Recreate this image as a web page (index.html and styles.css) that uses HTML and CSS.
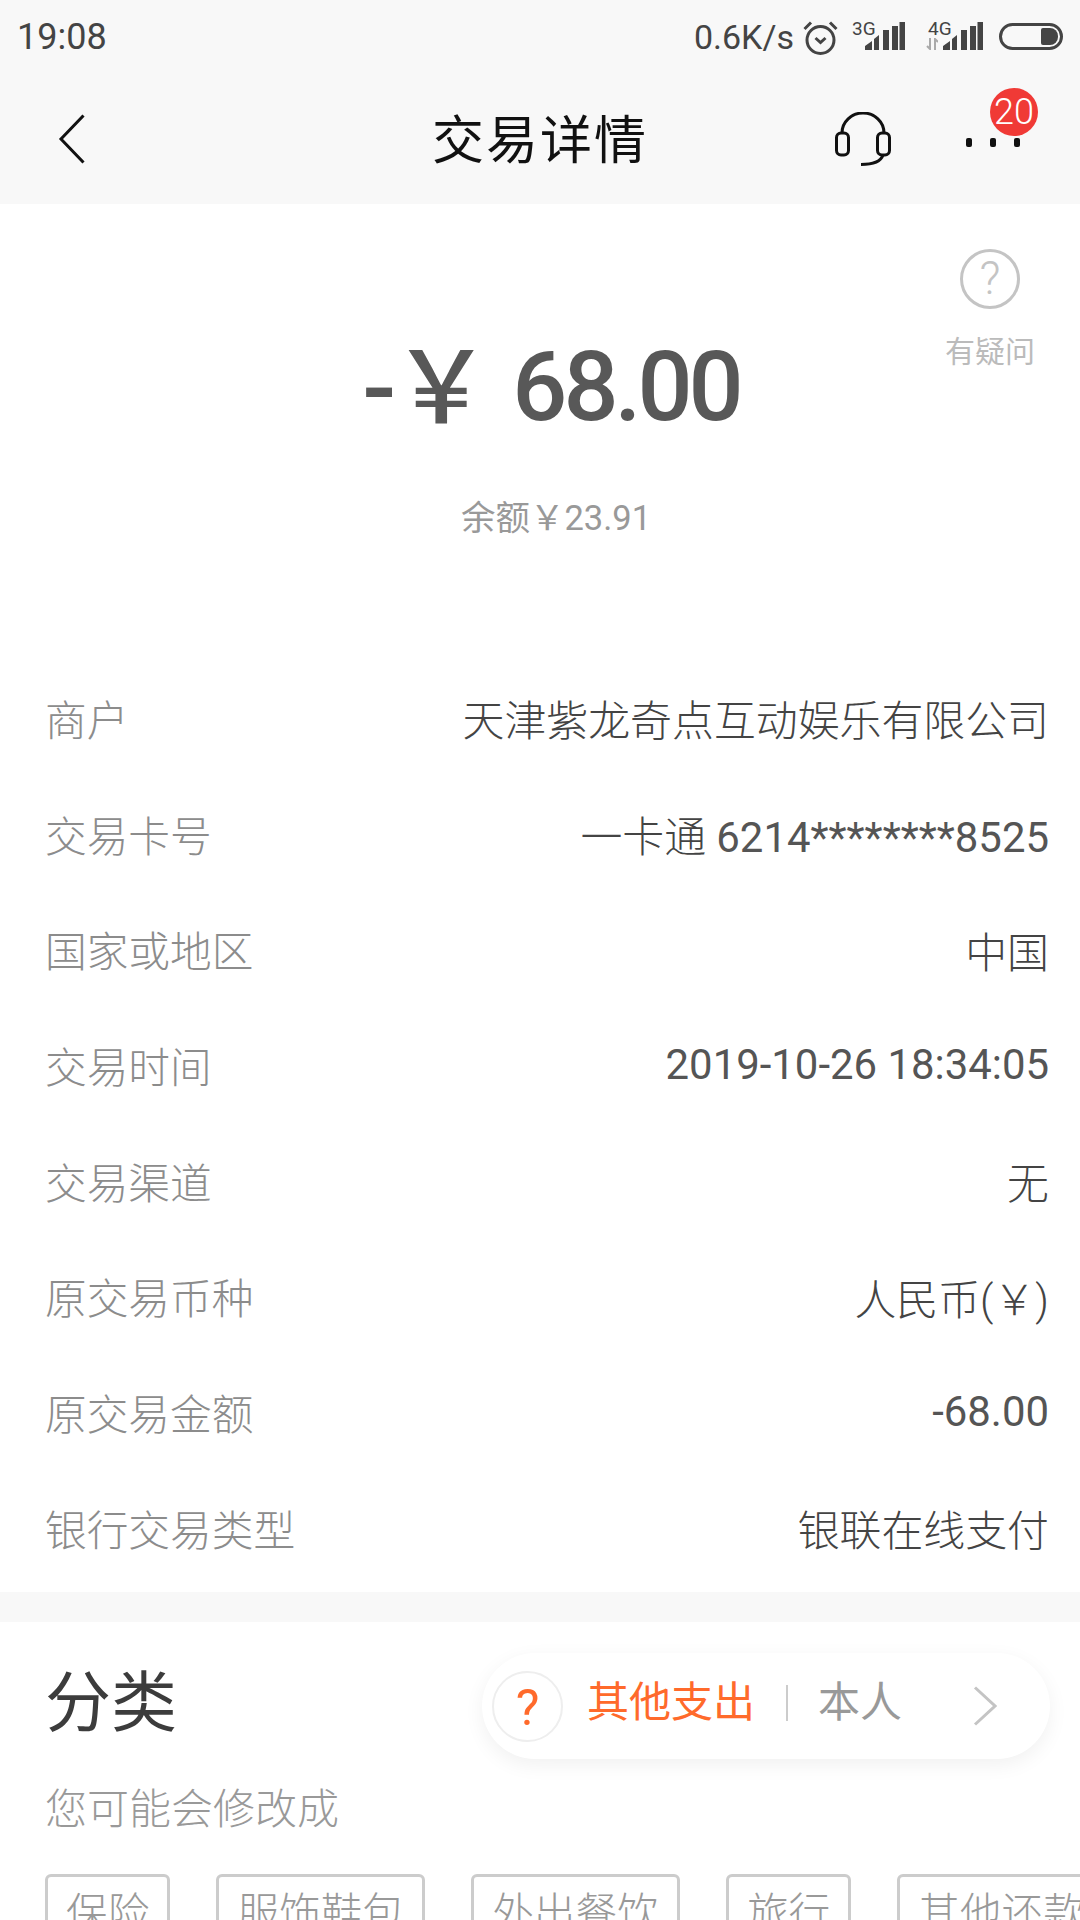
FILE: index.html
```html
<!DOCTYPE html>
<html lang="zh-CN">
<head>
    <meta charset="UTF-8">
    <meta name="viewport" content="width=device-width, initial-scale=1.0">
    <title>交易详情</title>
    <link rel="stylesheet" href="styles.css">
</head>
<body>
    <div class="page">
        <div class="top-area">
            <div class="status-bar">
                <span class="clock">19:08</span>
                <div class="status-right">
                    <span class="net-speed">0.6K/s</span>
                    <svg class="icon-alarm" width="35" height="35" viewBox="0 0 35 35" fill="none" stroke="#444" stroke-width="3">
                        <circle cx="17.5" cy="20" r="13.5"/>
                        <path d="M12.5 18l5 4.5 5-4.5"/>
                        <path d="M1.5 9L8 2.5M33.500 9L27 2.5"/>
                    </svg>
                    <div class="signal signal-3g">
                        <span class="signal-label">3G</span>
                        <svg width="40" height="28" viewBox="0 0 40 28" fill="#444">
                            <path d="M0 28v-4l7-5v9zM9 28V17l5-4v15zM18 28V8h6v20zM27 28V4h6v24zM34.500 28V0H40v28z"/>
                        </svg>
                    </div>
                    <div class="signal signal-4g">
                        <span class="signal-label">4G</span>
                        <svg class="arrows" width="12" height="12" viewBox="0 0 12 12" fill="none" stroke="#aaa" stroke-width="2">
                            <path d="M4 0v11L1 8M9 12V1l3 3"/>
                        </svg>
                        <svg width="40" height="28" viewBox="0 0 40 28" fill="#444">
                            <path d="M0 28v-4l7-5v9zM9 28V17l5-4v15zM18 28V8h6v20zM27 28V4h6v24zM34.500 28V0H40v28z"/>
                        </svg>
                    </div>
                    <div class="battery"><div class="battery-fill"></div></div>
                </div>
            </div>
            <div class="nav-bar">
                <svg class="back-icon" width="27" height="50" viewBox="0 0 27 50" fill="none" stroke="#111" stroke-width="3">
                    <path d="M25.500 1.500L3 25l22.500 23.500"/>
                </svg>
                <h1 class="nav-title">交易详情</h1>
                <div class="nav-actions">
                    <svg class="headset-icon" width="56" height="54" viewBox="0 0 56 54" fill="none" stroke="#111" stroke-width="3">
                        <path d="M7 22V21a21 20 0 0 1 42 0v1"/>
                        <rect x="1.500" y="21" width="12" height="22" rx="4.500"/>
                        <rect x="42.500" y="21" width="12" height="22" rx="4.500"/>
                        <path d="M48 43c-2 6-9 9.500-22 9.500"/>
                    </svg>
                    <div class="more">
                        <span class="dot"></span><span class="dot"></span><span class="dot"></span>
                        <span class="badge">20</span>
                    </div>
                </div>
            </div>
        </div>

        <div class="hero">
            <div class="help">
                <div class="help-circle">?</div>
                <span>有疑问</span>
            </div>
            <div class="amount"><span class="amount-cny">-￥</span><span class="amount-num">68.00</span></div>
            <div class="balance">余额￥23.91</div>
        </div>

        <div class="detail-list">
            <div class="detail-row"><span class="detail-label">商户</span><span class="detail-value">天津紫龙奇点互动娱乐有限公司</span></div>
            <div class="detail-row"><span class="detail-label">交易卡号</span><span class="detail-value">一卡通 <span class="detail-num">6214********8525</span></span></div>
            <div class="detail-row"><span class="detail-label">国家或地区</span><span class="detail-value">中国</span></div>
            <div class="detail-row"><span class="detail-label">交易时间</span><span class="detail-value detail-num">2019-10-26 18:34:05</span></div>
            <div class="detail-row"><span class="detail-label">交易渠道</span><span class="detail-value">无</span></div>
            <div class="detail-row"><span class="detail-label">原交易币种</span><span class="detail-value">人民币(￥)</span></div>
            <div class="detail-row"><span class="detail-label">原交易金额</span><span class="detail-value detail-num">-68.00</span></div>
            <div class="detail-row"><span class="detail-label">银行交易类型</span><span class="detail-value">银联在线支付</span></div>
        </div>

        <div class="category">
            <div class="category-head">
                <h2 class="category-title">分类</h2>
                <div class="category-pill">
                    <div class="pill-question">?</div>
                    <span class="pill-type">其他支出</span>
                    <span class="pill-line"></span>
                    <span class="pill-person">本人</span>
                    <svg class="pill-arrow" width="24" height="40" viewBox="0 0 24 40" fill="none" stroke="#c4c4c4" stroke-width="3">
                        <path d="M2 1.500L22 20 2 38.500"/>
                    </svg>
                </div>
            </div>
            <p class="category-hint">您可能会修改成</p>
            <div class="tag-list">
                <span class="tag">保险</span>
                <span class="tag">服饰鞋包</span>
                <span class="tag">外出餐饮</span>
                <span class="tag">旅行</span>
                <span class="tag">其他还款</span>
            </div>
        </div>
    </div>
</body>
</html>
```

FILE: styles.css
```css
* {
    margin: 0;
    padding: 0;
    box-sizing: border-box;
    font-family: 'Roboto', 'Noto Sans CJK SC', sans-serif;
}

body {
    background-color: #fff;
    width: 1080px;
    height: 1920px;
    overflow: hidden;
}

.page {
    width: 1080px;
    height: 1920px;
    overflow: hidden;
}

.top-area {
    background-color: #f8f8f8;
    height: 204px;
}

.status-bar {
    display: flex;
    justify-content: space-between;
    align-items: center;
    height: 74px;
    padding: 0 17px;
    color: #444;
    font-size: 34px;
}

.clock {
    font-size: 36px;
}

.status-right {
    display: flex;
    align-items: center;
}

.net-speed {
    line-height: 40px;
    margin-right: 9px;
}

.icon-alarm {
    margin-right: 14px;
}

.signal {
    position: relative;
    display: flex;
    align-items: flex-end;
    justify-content: flex-end;
    width: 53px;
    height: 28px;
    margin-top: -2px;
}

.signal-3g {
    margin-right: 23px;
}

.signal-4g {
    width: 55px;
    margin-right: 16px;
}

.signal-label {
    position: absolute;
    left: 0;
    top: -3px;
    font-size: 19px;
    line-height: 19px;
}

.arrows {
    position: absolute;
    left: -2px;
    bottom: 0;
}

.battery {
    display: flex;
    justify-content: flex-end;
    width: 64px;
    height: 27px;
    margin-bottom: 2px;
    padding: 2px;
    border: 3px solid #444;
    border-radius: 14px;
}

.battery-fill {
    width: 17px;
    background-color: #444;
    border-radius: 2px 8px 8px 2px;
}

.nav-bar {
    display: grid;
    grid-template-columns: 1fr auto 1fr;
    align-items: center;
    height: 130px;
    padding: 0 60px 0 58px;
}

.nav-title {
    color: #111;
    font-size: 52px;
    font-weight: normal;
    letter-spacing: 2px;
    margin: -6px -2px 0 0;
}

.nav-actions {
    display: flex;
    justify-content: flex-end;
    align-items: center;
}

.headset-icon {
    margin-right: 75px;
}

.more {
    position: relative;
    display: flex;
    gap: 18px;
    margin-top: 6px;
}

.dot {
    width: 6px;
    height: 9px;
    background-color: #111;
    border-radius: 2px;
}

.badge {
    position: absolute;
    left: 24px;
    top: -50px;
    width: 48px;
    height: 48px;
    background-color: #f03a36;
    border-radius: 50%;
    color: #fff;
    font-size: 36px;
    font-weight: 300;
    line-height: 48px;
    text-align: center;
}

.hero {
    position: relative;
    height: 456px;
    text-align: center;
}

.help {
    position: absolute;
    right: 45px;
    top: 45px;
    width: 90px;
    color: #bbb;
    font-size: 30px;
}

.help-circle {
    width: 60px;
    height: 60px;
    margin: 0 auto 18px;
    border: 3px solid #c4c4c4;
    border-radius: 50%;
    color: #c4c4c4;
    font-size: 46px;
    font-weight: 300;
    line-height: 52px;
}

.amount {
    display: flex;
    justify-content: center;
    align-items: center;
    height: 110px;
    padding-top: 128px;
    margin-left: 22px;
    color: #585858;
    font-weight: 500;
    box-sizing: content-box;
}

.amount-cny {
    font-size: 100px;
    letter-spacing: -5px;
    margin: 0 26px 16px 0;
}

.amount-num {
    font-size: 97px;
    letter-spacing: -4px;
}

.balance {
    margin-top: 48px;
    margin-left: 32px;
    color: #999;
    font-size: 34.5px;
}

.detail-list {
    padding: 0 31px 0 45px;
    height: 932px;
}

.detail-row {
    display: flex;
    justify-content: space-between;
    align-items: center;
    height: 115.7px;
    font-weight: 300;
}

.detail-label {
    color: #8c8c8c;
    font-size: 41.7px;
}

.detail-value {
    color: #444;
    font-size: 41.9px;
}

.detail-num {
    color: #555;
    font-weight: 400;
}

.category {
    border-top: 30px solid #f8f8f8;
    padding-left: 45px;
    white-space: nowrap;
}

.category-head {
    display: flex;
    justify-content: space-between;
    align-items: center;
    padding: 31px 30px 0 0;
}

.category-title {
    color: #3c3c3c;
    font-size: 66px;
    font-weight: normal;
    margin-top: -18px;
}

.category-pill {
    display: flex;
    align-items: center;
    width: 568px;
    height: 106px;
    padding: 0 53px 0 10px;
    background-color: #fff;
    border-radius: 53px;
    box-shadow: 0 6px 20px rgba(0, 0, 0, 0.06);
    font-size: 42px;
}

.pill-question {
    width: 71px;
    height: 71px;
    margin-right: 24px;
    border: 2px solid #eee;
    border-radius: 50%;
    color: #ff6a2b;
    font-size: 50px;
    line-height: 71px;
    text-align: center;
}

.pill-type {
    color: #ff6a2b;
    margin-bottom: 15px;
}

.pill-line {
    width: 2px;
    height: 36px;
    margin: 0 30px 6px 31px;
    background-color: #ccc;
}

.pill-person {
    color: #999;
    margin-bottom: 15px;
}

.pill-arrow {
    margin-left: auto;
}

.category-hint {
    margin-top: 16px;
    color: #999;
    font-size: 42px;
    font-weight: 300;
}

.tag-list {
    display: flex;
    gap: 46px;
    margin-top: 38px;
}

.tag {
    flex-shrink: 0;
    padding: 3px 18px;
    border: 3px solid #ccc;
    border-radius: 6px;
    color: #999;
    font-size: 41.7px;
    font-weight: 300;
}
```
